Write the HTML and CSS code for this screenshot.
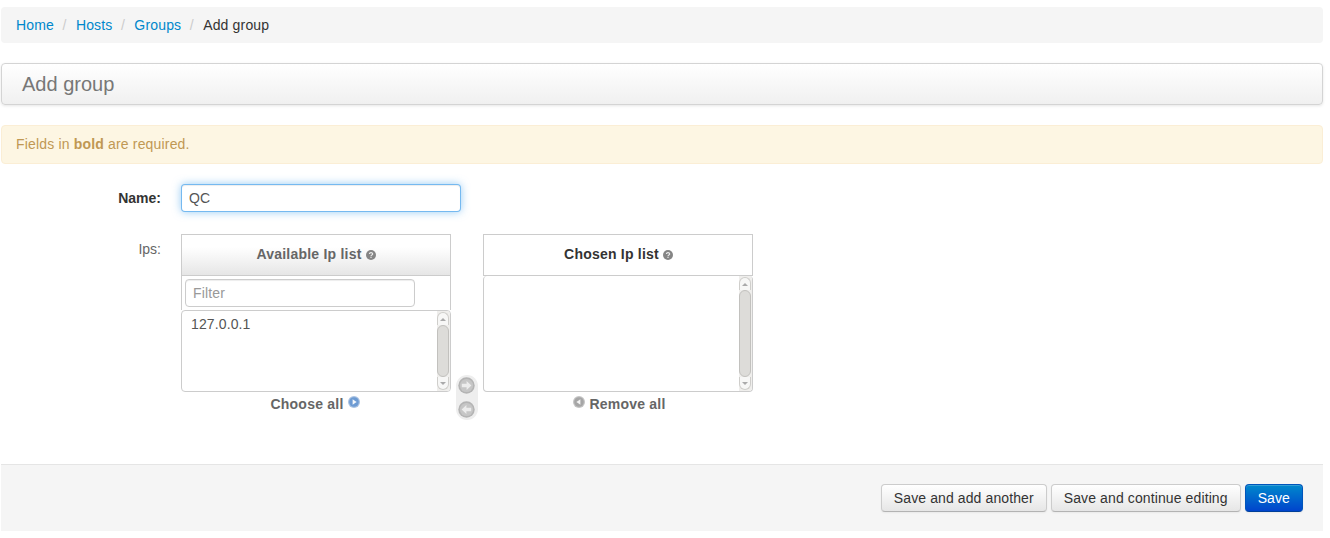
FILE: index.html
```html
<!DOCTYPE html>
<html lang="en">
<head>
<meta charset="utf-8">
<title>Add group</title>
<link rel="stylesheet" href="styles.css">
</head>
<body>
<div class="page">
  <ul class="breadcrumb">
    <li><a href="#">Home</a><span class="sep">/</span></li>
    <li><a href="#">Hosts</a><span class="sep">/</span></li>
    <li><a href="#">Groups</a><span class="sep">/</span></li>
    <li class="active">Add group</li>
  </ul>
  <div class="page-header"><h1>Add group</h1></div>
  <div class="alert">Fields in <strong>bold</strong> are required.</div>
  <form class="form">
    <div class="row row-name">
      <label class="label label-req">Name:</label>
      <input class="name-input" type="text" value="QC">
    </div>
    <div class="row row-ips">
      <label class="label label-ips">Ips:</label>
      <div class="selector">
        <div class="sel-col">
          <div class="sel-title sel-title-grad">Available Ip list
            <svg class="help" viewBox="0 0 10 10"><circle cx="5" cy="5" r="5" fill="#858585"/><path d="M3.4 4 C3.4 2.2 6.7 2.2 6.7 4 C6.7 5 5 5 5 6" fill="none" stroke="#eee" stroke-width="1.1"/><rect x="4.4" y="6.7" width="1.2" height="1.2" fill="#eee"/></svg>
          </div>
          <div class="filter-row"><input class="filter" type="text" placeholder="Filter"></div>
          <div class="list list-short">
            <div class="list-items">127.0.0.1</div>
            <div class="scroll">
              <span class="scroll-btn scroll-btn-top"><i class="tri tri-up"></i></span>
              <span class="scroll-thumb"></span>
              <span class="scroll-btn scroll-btn-bottom"><i class="tri tri-down"></i></span>
            </div>
          </div>
          <a class="sel-link sel-link-choose" href="#">Choose all
            <svg class="link-icon" viewBox="0 0 12 12"><circle cx="6" cy="6" r="6" fill="#a9c2e2"/><circle cx="6" cy="6" r="4.8" fill="#6d9bd3"/><path d="M4.6 3.2 L8.6 6 L4.6 8.8 Z" fill="#f4f7fb"/></svg>
          </a>
        </div>
        <div class="arrows">
          <svg class="arrow" viewBox="0 0 17 17"><circle cx="8.5" cy="8.5" r="8.2" fill="#b4b4b4"/><circle cx="8.5" cy="8.5" r="6.6" fill="#c6c6c6"/><path d="M3.8 6.8 H8.6 V4 L13.4 8.5 L8.6 13 V10.2 H3.8 Z" fill="#ececec"/></svg>
          <svg class="arrow" viewBox="0 0 17 17"><circle cx="8.5" cy="8.5" r="8.2" fill="#b4b4b4"/><circle cx="8.5" cy="8.5" r="6.6" fill="#c6c6c6"/><path d="M13.2 6.8 H8.4 V4 L3.6 8.5 L8.4 13 V10.2 H13.2 Z" fill="#ececec"/></svg>
        </div>
        <div class="sel-col">
          <div class="sel-title sel-title-chosen">Chosen Ip list
            <svg class="help" viewBox="0 0 10 10"><circle cx="5" cy="5" r="5" fill="#858585"/><path d="M3.4 4 C3.4 2.2 6.7 2.2 6.7 4 C6.7 5 5 5 5 6" fill="none" stroke="#eee" stroke-width="1.1"/><rect x="4.4" y="6.7" width="1.2" height="1.2" fill="#eee"/></svg>
          </div>
          <div class="list list-tall">
            <div class="list-items"></div>
            <div class="scroll">
              <span class="scroll-btn scroll-btn-top"><i class="tri tri-up"></i></span>
              <span class="scroll-thumb"></span>
              <span class="scroll-btn scroll-btn-bottom"><i class="tri tri-down"></i></span>
            </div>
          </div>
          <a class="sel-link sel-link-remove" href="#">
            <svg class="link-icon" viewBox="0 0 12 12"><circle cx="6" cy="6" r="6" fill="#c4c4c4"/><circle cx="6" cy="6" r="4.8" fill="#a6a6a6"/><path d="M7.4 3.2 L3.4 6 L7.4 8.8 Z" fill="#f4f4f4"/></svg>
            Remove all</a>
        </div>
      </div>
    </div>
    <div class="actions">
      <button class="btn" type="button">Save and add another</button>
      <button class="btn" type="button">Save and continue editing</button>
      <button class="btn btn-primary" type="button">Save</button>
    </div>
  </form>
</div>
</body>
</html>
```
FILE: styles.css
```css
* { box-sizing: border-box; }
html, body { margin: 0; padding: 0; background: #fff; }
body {
  font-family: "Liberation Sans", Arial, sans-serif;
  font-size: 14px;
  line-height: 20px;
  letter-spacing: .17px;
  color: #333;
}
a { text-decoration: none; color: #0088cc; }
.page { padding: 7px 7px 7px 1px; }

.breadcrumb {
  display: flex;
  list-style: none;
  margin: 0 0 20px;
  padding: 8px 15px;
  height: 36px;
  background: #f5f5f5;
  border-radius: 4px;
}
.breadcrumb .active { color: #333; }
.sep { color: #ccc; padding: 0 9.4px 0 8.4px; }

.page-header {
  height: 42px;
  margin-bottom: 20px;
  padding: 0 20px;
  display: flex;
  align-items: center;
  border: 1px solid #d4d4d4;
  border-radius: 4px;
  background: linear-gradient(#ffffff, #f0f0f0);
  box-shadow: 0 1px 3px rgba(0,0,0,.1);
}
.page-header h1 {
  margin: 0;
  font-size: 20px;
  font-weight: 400;
  line-height: 30px;
  letter-spacing: 0;
  color: #777;
}

.alert {
  height: 39px;
  padding: 8px 14px;
  background: #fdf6e3;
  border: 1px solid #fbeed5;
  border-radius: 4px;
  color: #c09853;
}

.row { display: flex; }
.label { width: 160px; text-align: right; flex: none; margin-right: 20px; color: #666; }
.row-name { margin-top: 20px; align-items: center; }
.label-req { font-weight: 700; color: #333; letter-spacing: 0; }
.name-input {
  width: 280px;
  height: 28px;
  padding: 4px 7px;
  font: 14px/20px "Liberation Sans", Arial, sans-serif;
  letter-spacing: .17px;
  color: #555;
  background: #fff;
  border: 1px solid rgba(82,168,236,.8);
  border-radius: 4px;
  outline: none;
  box-shadow: inset 0 1px 1px rgba(0,0,0,.075), 0 0 8px rgba(82,168,236,.6);
}

.row-ips { margin-top: 22px; }
.label-ips { padding-top: 5px; font-size: 14px; letter-spacing: 0; }
.selector { display: flex; gap: 5px; }
.sel-col { width: 270px; display: flex; flex-direction: column; }

.sel-title {
  height: 42px;
  padding-bottom: 2px;
  border: 1px solid #ccc;
  display: flex;
  align-items: center;
  justify-content: center;
  gap: 4px;
  font-weight: 700;
  letter-spacing: .22px;
}
.sel-title-grad { color: #666; background: linear-gradient(#ffffff 30%, #e6e6e6); }
.sel-title-chosen { color: #333; background: #fff; padding-left: 1px; }
.help { width: 10px; height: 10px; margin-top: 2px; }

.filter-row {
  height: 34px;
  padding: 3px 36px 0 3px;
  border-right: 1px solid #ccc;
  border-left: 1px solid #ccc;
  background: #fff;
}
.filter {
  display: block;
  width: 230px;
  height: 28px;
  padding: 4px 7px;
  font: 14px/20px "Liberation Sans", Arial, sans-serif;
  letter-spacing: .17px;
  border: 1px solid #ccc;
  border-radius: 4px;
  background: #fff;
  outline: none;
  box-shadow: inset 0 1px 1px rgba(0,0,0,.075);
}
.filter::placeholder { color: #999; opacity: 1; }

.list {
  display: flex;
  border: 1px solid #ccc;
  border-radius: 4px;
  background: #fff;
  overflow: hidden;
}
.list-short { height: 82px; }
.list-tall { height: 116px; border-top: 0; }
.list-items { flex: 1; padding: 3px 9px; color: #555; letter-spacing: .12px; }

.scroll {
  width: 13px;
  padding: 1px 1px 1px 0;
  display: flex;
  flex-direction: column;
  background: #efeeec;
}
.scroll-btn {
  flex: none;
  height: 13px;
  display: flex;
  align-items: center;
  justify-content: center;
  background: #f7f7f6;
  border: 1px solid #cfcecb;
}
.scroll-btn-top { border-radius: 6px 6px 0 0; border-bottom: 0; }
.scroll-btn-bottom { border-radius: 0 0 6px 6px; border-top: 0; }
.scroll-thumb {
  flex: 1;
  background: #dddcd9;
  border: 1px solid #c2c1be;
  border-radius: 6px;
}
.tri { width: 0; height: 0; border-left: 3px solid transparent; border-right: 3px solid transparent; }
.tri-up { border-bottom: 3px solid #aaa; }
.tri-down { border-top: 3px solid #aaa; }

.sel-link {
  display: flex;
  align-items: center;
  justify-content: center;
  gap: 4px;
  height: 24px;
  font-weight: 700;
  letter-spacing: .22px;
  color: #666;
}
.sel-link-choose { padding-right: 2px; }
.sel-link-remove { padding-left: 3px; }
.link-icon { width: 12px; height: 12px; margin-top: -4px; }

.arrows {
  flex: none;
  align-self: flex-start;
  width: 22px;
  height: 45px;
  margin-top: 141px;
  padding: 2px 3px 0 2px;
  display: flex;
  flex-direction: column;
  gap: 7px;
  background: #eee;
  border-radius: 11px;
}
.arrow { width: 17px; height: 17px; display: block; }

.actions {
  display: flex;
  justify-content: flex-end;
  gap: 4px;
  height: 67px;
  margin-top: 44px;
  padding: 19px 20px 0;
  background: #f5f5f5;
  border-top: 1px solid #e5e5e5;
}
.btn {
  height: 28px;
  padding: 3px 12px 5px;
  font: 14px/20px "Liberation Sans", Arial, sans-serif;
  letter-spacing: .11px;
  color: #333;
  background: linear-gradient(#ffffff, #e6e6e6);
  border: 1px solid #ccc;
  border-bottom-color: #b3b3b3;
  border-radius: 4px;
  box-shadow: inset 0 1px 0 rgba(255,255,255,.2), 0 1px 2px rgba(0,0,0,.05);
}
.btn-primary {
  color: #fff;
  background: linear-gradient(#0088cc, #0044cc);
  border-color: #0055bb #0055bb #003f99;
}
```
